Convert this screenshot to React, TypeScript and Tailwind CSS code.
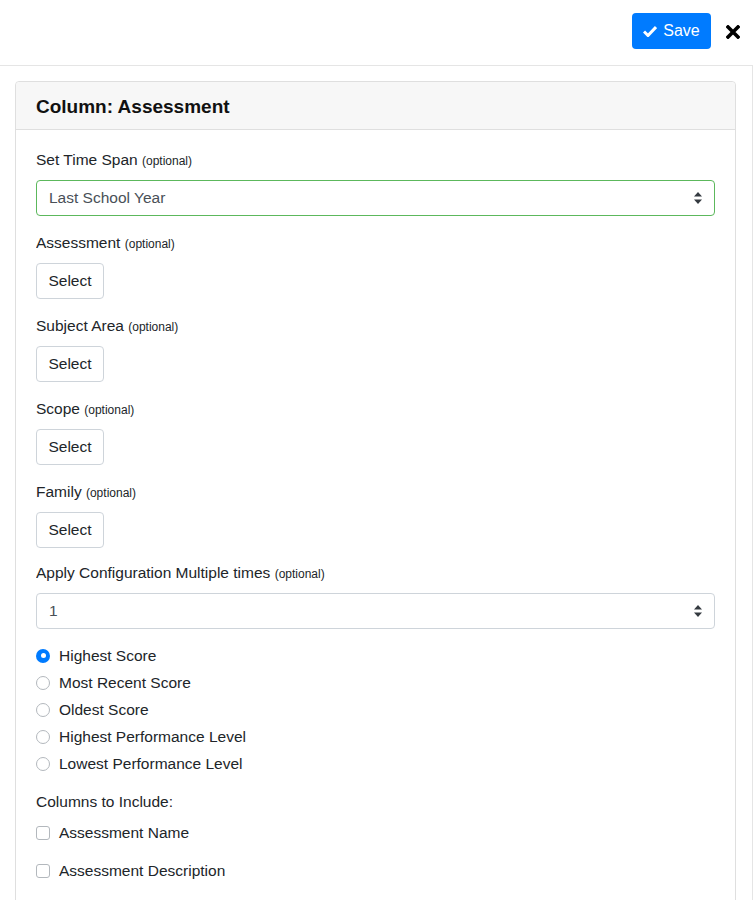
import React, { useState } from 'react';

const font = { fontFamily: '"Liberation Sans", Arial, sans-serif' };

const Caret: React.FC = () => (
  <svg width="8" height="12" viewBox="0 0 8 12" className="shrink-0">
    <path d="M4 0 L8 4.5 H0 Z" fill="#343a40" />
    <path d="M4 12 L8 7.5 H0 Z" fill="#343a40" />
  </svg>
);

const Label: React.FC<{ text: string }> = ({ text }) => (
  <div className="h-[22px] overflow-hidden text-[15.5px] leading-[22px] text-[#212529] mb-[9px]">
    {text} <span className="text-[12px] leading-[22px]">(optional)</span>
  </div>
);

const SelectBox: React.FC<{ value: string; green?: boolean }> = ({ value, green }) => (
  <div
    className={`h-[36px] rounded-[4px] border flex items-center justify-between pl-[12px] pr-[12px] text-[15.5px] text-[#495057] ${
      green ? 'border-[#5cb85c]' : 'border-[#ced4da]'
    }`}
  >
    <span>{value}</span>
    <Caret />
  </div>
);

const SelectButton: React.FC = () => (
  <button className="block h-[36px] w-[68px] rounded-[4px] border border-[#ced4da] bg-white text-[15.5px] text-[#212529]">
    Select
  </button>
);

const Radio: React.FC<{ label: string; checked: boolean; onClick: () => void }> = ({ label, checked, onClick }) => (
  <div className="flex items-center h-[27px] cursor-pointer" onClick={onClick}>
    {checked ? (
      <span className="w-[14px] h-[14px] rounded-full bg-[#007bff] flex items-center justify-center">
        <span className="w-[5px] h-[5px] rounded-full bg-white" />
      </span>
    ) : (
      <span className="w-[14px] h-[14px] rounded-full border border-[#b3b8bd] bg-white" />
    )}
    <span className="ml-[9px] text-[15.5px] text-[#212529]">{label}</span>
  </div>
);

const Checkbox: React.FC<{ label: string }> = ({ label }) => (
  <div className="flex items-center h-[38px]">
    <span className="w-[14px] h-[14px] rounded-[3px] border border-[#b3b8bd] bg-white" />
    <span className="ml-[9px] text-[15.5px] text-[#212529]">{label}</span>
  </div>
);

const App: React.FC = () => {
  const [choice, setChoice] = useState('Highest Score');
  const choices = [
    'Highest Score',
    'Most Recent Score',
    'Oldest Score',
    'Highest Performance Level',
    'Lowest Performance Level',
  ];
  const pickers = ['Assessment', 'Subject Area', 'Scope', 'Family'];

  return (
    <div className="w-[753px] h-[900px] bg-white overflow-hidden" style={font}>
      <div className="h-[66px] border-b border-[#e5e5e5] flex justify-end items-start pt-[13px] pr-[13px]">
        <button className="h-[36px] w-[79px] rounded-[4px] bg-[#007bff] text-white text-[16px] flex items-center justify-center gap-[6px]">
          <svg width="14" height="12" viewBox="0 0 14 12">
            <path d="M1 6.5 L5 10.5 L13 2" stroke="white" strokeWidth="3" fill="none" strokeLinejoin="miter" />
          </svg>
          Save
        </button>
        <button className="ml-[14px] mt-[11px] w-[15px] h-[15px] flex items-center justify-center">
          <svg width="14" height="14" viewBox="0 0 14 14">
            <path d="M2 2 L12 12 M12 2 L2 12" stroke="black" strokeWidth="3.6" strokeLinecap="square" />
          </svg>
        </button>
      </div>

      <div className="border-r border-[#e5e5e5] h-[834px] pt-[15px] pl-[15px] pr-[16px]">
        <div className="border border-[#dfdfdf] rounded-[4px] h-[900px]">
          <div className="h-[48px] bg-[#f7f7f7] border-b border-[#dfdfdf] flex items-center px-[20px] pt-[3px] rounded-t-[4px]">
            <h2 className="text-[19px] font-bold text-[#111]">Column: Assessment</h2>
          </div>
          <div className="px-[20px] pt-[19px]">
            <div className="mb-[16px]">
              <Label text="Set Time Span" />
              <SelectBox value="Last School Year" green />
            </div>
            {pickers.map((t, i) => (
              <div key={t} className={i === pickers.length - 1 ? 'mb-[14px]' : 'mb-[16px]'}>
                <Label text={t} />
                <SelectButton />
              </div>
            ))}
            <div className="mb-[13px]">
              <Label text="Apply Configuration Multiple times" />
              <SelectBox value="1" />
            </div>
            <div className="flex flex-col">
              {choices.map((c) => (
                <Radio key={c} label={c} checked={choice === c} onClick={() => setChoice(c)} />
              ))}
            </div>
            <div className="mt-[14px] h-[22px] text-[15.5px] leading-[22px] text-[#212529]">Columns to Include:</div>
            <div className="mt-[1px]">
              <Checkbox label="Assessment Name" />
              <Checkbox label="Assessment Description" />
            </div>
          </div>
        </div>
      </div>
    </div>
  );
};

export default App;
